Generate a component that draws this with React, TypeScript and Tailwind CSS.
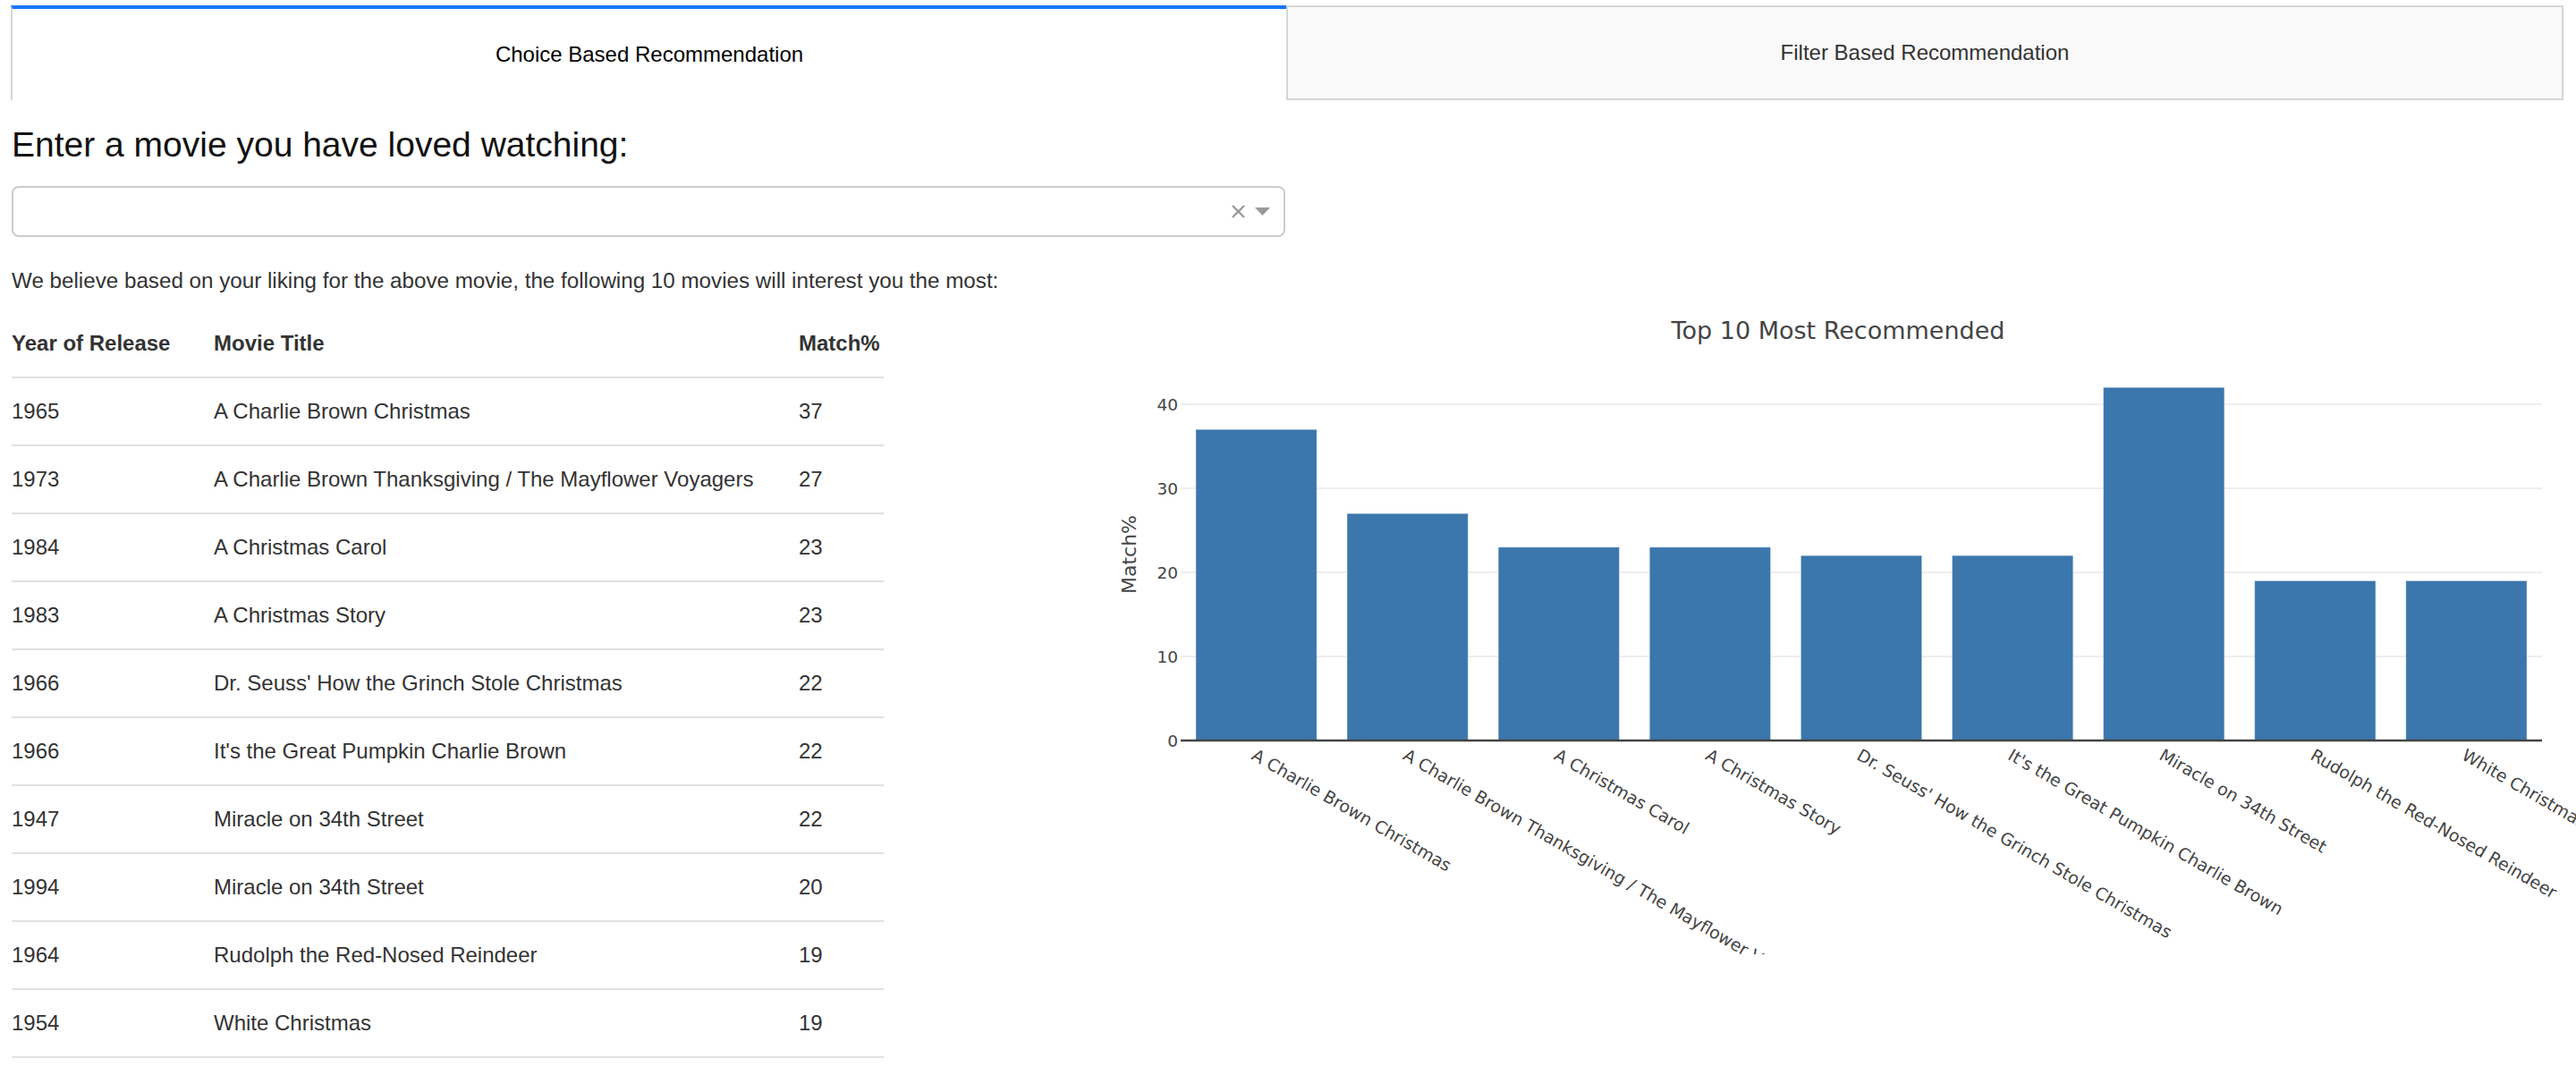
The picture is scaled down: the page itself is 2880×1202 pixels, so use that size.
const movies = [
  { year: 1965, title: 'A Charlie Brown Christmas', match: 37 },
  { year: 1973, title: 'A Charlie Brown Thanksgiving / The Mayflower Voyagers', match: 27 },
  { year: 1984, title: 'A Christmas Carol', match: 23 },
  { year: 1983, title: 'A Christmas Story', match: 23 },
  { year: 1966, title: "Dr. Seuss' How the Grinch Stole Christmas", match: 22 },
  { year: 1966, title: "It's the Great Pumpkin Charlie Brown", match: 22 },
  { year: 1947, title: 'Miracle on 34th Street', match: 22 },
  { year: 1994, title: 'Miracle on 34th Street', match: 20 },
  { year: 1964, title: 'Rudolph the Red-Nosed Reindeer', match: 19 },
  { year: 1954, title: 'White Christmas', match: 19 },
];

// same titles are merged into one category, like the plotly figure does
const bars = movies.reduce<{ label: string; value: number }[]>((acc, m) => {
  const hit = acc.find((b) => b.label === m.title);
  if (hit) hit.value += m.match;
  else acc.push({ label: m.title, value: m.match });
  return acc;
}, []);

// chart geometry, in page pixels
const X0 = 1320;
const X1 = 2842;
const Y0 = 828;
const UNIT = 9.4;
const SVG_LEFT = 1160;
const SVG_TOP = 347;

function Chart() {
  const step = (X1 - X0) / bars.length;
  return (
    <svg width={1720} height={720} className="ml-[172px] shrink-0 block" style={{ fontFamily: '"DejaVu Sans", Verdana, sans-serif' }}>
      <g transform={`translate(${-SVG_LEFT},${-SVG_TOP})`}>
        <text x={2055} y={369} textAnchor="middle" dominantBaseline="central" fontSize={27} fill="#444">
          Top 10 Most Recommended
        </text>

        {[10, 20, 30, 40].map((v) => (
          <line key={v} x1={X0} x2={X1} y1={Y0 - v * UNIT} y2={Y0 - v * UNIT} stroke="#eeeeee" strokeWidth={2} />
        ))}
        {[0, 10, 20, 30, 40].map((v) => (
          <text key={v} x={1317} y={Y0 - v * UNIT} textAnchor="end" dominantBaseline="central" fontSize={18.5} fill="#444">
            {v}
          </text>
        ))}

        <text transform="translate(1262,620) rotate(-90)" textAnchor="middle" dominantBaseline="central" fontSize={22} fill="#444">
          Match%
        </text>

        {bars.map((b, i) => (
          <rect
            key={b.label}
            x={X0 + step * i + step * 0.1}
            y={Y0 - b.value * UNIT}
            width={step * 0.8}
            height={b.value * UNIT}
            fill="#3b76ad"
            stroke="#ffffff"
            strokeOpacity={0.4}
            strokeWidth={1}
          />
        ))}

        <line x1={X0} x2={X1} y1={Y0} y2={Y0} stroke="#444" strokeWidth={2.5} />

        {bars.map((b, i) => (
          <text
            key={b.label}
            transform={`translate(${X0 + step * (i + 0.5)},837) rotate(30)`}
            x={0}
            y={13}
            fontSize={19}
            fill="#444"
          >
            {b.label}
          </text>
        ))}
      </g>
    </svg>
  );
}

export default function App() {
  return (
    <div className="w-[2880px] min-h-[1202px] bg-white overflow-hidden text-[#333]" style={{ fontFamily: '"Liberation Sans", Arial, sans-serif' }}>
      {/* Tabs */}
      <div className="flex pl-[12px] pr-[14px] pt-[6px]">
        <div className="flex-1 h-[106px] border-t-4 border-t-[#1975fa] border-l-2 border-l-[#d6d6d6] bg-white flex items-center justify-center text-[24px] text-black">
          Choice Based Recommendation
        </div>
        <div className="flex-1 h-[106px] border-2 border-[#d6d6d6] bg-[#f9f9f9] flex items-center justify-center text-[24px] text-[#333]">
          Filter Based Recommendation
        </div>
      </div>

      <div className="pl-[13px]">
        <h3 className="mt-[26px] text-[39px] leading-[47px] text-[#111]">Enter a movie you have loved watching:</h3>

        {/* Dropdown */}
        <div className="mt-[23px] w-[1424px] h-[57px] border-2 border-[#cccccc] rounded-[8px] flex items-center justify-end pr-[15px] gap-[11px]">
          <svg width="15" height="15" viewBox="0 0 15 15">
            <path d="M1 1 L14 14 M14 1 L1 14" stroke="#999" strokeWidth="2.4" />
          </svg>
          <svg width="17" height="9" viewBox="0 0 17 9">
            <polygon points="0,0 17,0 8.5,9" fill="#999" />
          </svg>
        </div>

        <p className="mt-[31px] text-[24.2px] leading-[36px]">
          We believe based on your liking for the above movie, the following 10 movies will interest you the most:
        </p>

        <div className="mt-[15px] flex items-start">
          {/* Table */}
          <div className="w-[975px] shrink-0 text-[24px]">
            <div className="flex h-[76px] items-center border-b-2 border-[#e1e1e1] font-bold">
              <div className="w-[226px]">Year of Release</div>
              <div className="w-[654px]">Movie Title</div>
              <div className="flex-1">Match%</div>
            </div>
            {movies.map((m, i) => (
              <div key={i} className="flex h-[76px] items-center border-b-2 border-[#e1e1e1]">
                <div className="w-[226px]">{m.year}</div>
                <div className="w-[654px]">{m.title}</div>
                <div className="flex-1">{m.match}</div>
              </div>
            ))}
          </div>

          <Chart />
        </div>
      </div>
    </div>
  );
}
